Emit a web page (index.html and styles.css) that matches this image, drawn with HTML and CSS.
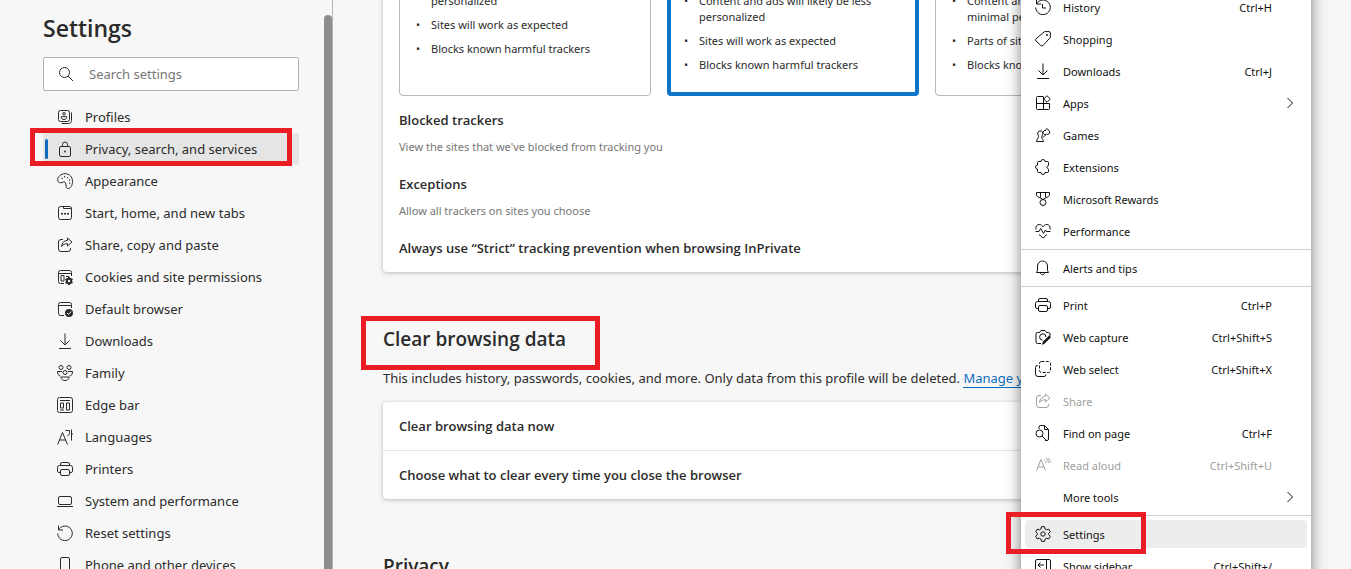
FILE: index.html
```html
<!DOCTYPE html>
<html lang="en">
<head>
  <meta charset="utf-8">
  <title>Settings</title>
  <link rel="stylesheet" href="styles.css">
</head>
<body>
  <svg class="sprite" aria-hidden="true">
    <symbol id="search" viewBox="0 0 16 16"><circle cx="6.5" cy="6.5" r="5"/><path d="M10 10l5 5"/></symbol>
    <symbol id="profiles" viewBox="0 0 16 16"><rect x="1.5" y="1.5" width="11" height="11" rx="2"/><circle cx="7" cy="4.8" r="1.3"/><path d="M4.2 7.7h5.6v.8c0 1.2-1.2 2-2.8 2s-2.8-.8-2.8-2zM14.5 3.5v8c0 1.8-1.2 3-3 3h-7"/></symbol>
    <symbol id="lock" viewBox="0 0 16 16"><rect x="2.5" y="5.5" width="11" height="10" rx="1.5"/><path d="M5.5 5.5V3.500a2.500 2.500 0 0 1 5 0v2"/><circle class="solid" cx="8" cy="10.5" r=".9"/></symbol>
    <symbol id="palette" viewBox="0 0 16 16"><path d="M.7 6.500C1 3.500 4 .7 8 .7c4.500 0 7.500 3.300 7.500 7.600 0 4-1.700 7-4.200 7.200-3.300.2-1.500-4.600-3.300-6.300-1.300-1.200-2.300.5-4.300.6C1.700 9.800.5 8.500.7 6.500z"/><path class="solid" d="M7 3h1.200v1.200H7zM10 4h1.200v1.200H10zM12 6.500h1.200v1.200H12zM12 9.500h1.200v1.200H12zM4.500 4.800h1.200V6H4.500z"/></symbol>
    <symbol id="start" viewBox="0 0 16 16"><rect x="1.5" y="1.5" width="13" height="13" rx="2"/><path d="M6.500 1.500v2h8"/><path class="solid" d="M4 8h2v1.500H4zM7 8h2v1.500H7zM10 8h2v1.500h-2z"/></symbol>
    <symbol id="share" viewBox="0 0 16 16"><path d="M6 2.500H4a2.500 2.500 0 0 0-2.500 2.500v7A2.500 2.500 0 0 0 4 14.500h7a2.500 2.500 0 0 0 2.500-2.500v-1"/><path d="M10.500 1l4.500 4-4.500 4V6.700C8 6.600 6.300 7.300 4.500 9.500 4.800 5.800 7 3.600 10.500 3.300z"/></symbol>
    <symbol id="cookies" viewBox="0 0 16 16"><path d="M7 14.500H3.500a2 2 0 0 1-2-2v-9a2 2 0 0 1 2-2h9a2 2 0 0 1 2 2V7M1.500 4.500h13M4 6.500h3v5.500H4zM9 7.500h3"/><circle class="solid" cx="12" cy="12" r="3.2"/><path class="teeth" d="M12 8v8M8.500 10l7 4M15.500 10l-7 4"/><circle class="hole" cx="12" cy="12" r="1.2"/></symbol>
    <symbol id="default" viewBox="0 0 16 16"><path d="M7 14.500H3.500a2 2 0 0 1-2-2v-9a2 2 0 0 1 2-2h9a2 2 0 0 1 2 2V7M1.500 4.500h13"/><circle class="solid" cx="12" cy="12" r="4"/><path class="tick" d="M10 12l1.500 1.500 2.700-3"/></symbol>
    <symbol id="download" viewBox="0 0 16 16"><path d="M8 .5v11M3.500 7.500L8 12l4.500-4.500M2 15.500h12"/></symbol>
    <symbol id="family" viewBox="0 0 16 16"><circle cx="4" cy="2.500" r="2"/><circle cx="12" cy="2.500" r="2"/><circle cx="8" cy="7.500" r="2"/><path d="M3.500 11C1.500 10.700.5 9.500.5 6.500H5M12.500 11c2-.3 3-1.500 3-4.500H11M4 12h8c0 2.400-1.800 3.500-4 3.500S4 14.400 4 12z"/></symbol>
    <symbol id="edgebar" viewBox="0 0 16 16"><rect x=".5" y=".5" width="15" height="15" rx="2"/><path d="M3 3.500h10M3.500 6h3v5h-3zM9.500 6h3v7h-3zM3 13h4"/></symbol>
    <symbol id="languages" viewBox="0 0 16 16"><path d="M.7 15.500L5.500 3.500l5 12M2.500 11h6.500M8.500 1.500h4v2c0 2-.8 3-2 3.500M14.500.5v11M14.500 5h1.500"/></symbol>
    <symbol id="printer" viewBox="0 0 16 16"><path d="M3.500 11.500H2A1.500 1.500 0 0 1 .5 10V6.500a2 2 0 0 1 2-2h11a2 2 0 0 1 2 2V10a1.500 1.500 0 0 1-1.500 1.500h-1.500M3.500 4.500V3A1.500 1.500 0 0 1 5 1.500h6A1.500 1.500 0 0 1 12.500 3v1.500"/><rect x="3.5" y="8.5" width="9" height="6" rx="1.5"/></symbol>
    <symbol id="laptop" viewBox="0 0 16 16"><rect x="1.5" y="3.5" width="13" height="8" rx="1.5"/><path d="M0 13.500h16"/></symbol>
    <symbol id="reset" viewBox="0 0 16 16"><path d="M1.500.5V5H6M1.500 5a7.300 7.300 0 1 1-.8 3.500"/></symbol>
    <symbol id="phone" viewBox="0 0 16 16"><rect x="3.5" y=".5" width="9" height="15" rx="1.5"/><path d="M6.500 13h3"/></symbol>
    <symbol id="history" viewBox="0 0 16 16"><path d="M1.500.5V5H6M1.500 5a7.300 7.300 0 1 1-.8 3.500M7.500 5v4H11"/></symbol>
    <symbol id="tag" viewBox="0 0 16 16"><path d="M9.500.6H14A1.500 1.500 0 0 1 15.400 2v4.500L8 14.500a1.600 1.600 0 0 1-2.200 0L1 10a1.600 1.600 0 0 1 0-2.200z"/><circle class="solid" cx="12" cy="4" r=".9"/></symbol>
    <symbol id="apps" viewBox="0 0 16 16"><path d="M8 1.500H2.500a1 1 0 0 0-1 1v11a1 1 0 0 0 1 1h11a1 1 0 0 0 1-1V8.500h-13M8.500 1.500v13M12 .7L15.300 4 12 7.300 8.700 4z"/></symbol>
    <symbol id="games" viewBox="0 0 16 16"><path d="M1.500 14.500h7c0-2-2-2.500-1.800-4.500.1-.8.800-1.200.8-2.500A2.300 2.300 0 0 0 5 4 2.300 2.300 0 0 0 2.800 7c0 1 1 1.300.8 2.500-.2 2-2.100 3-2.100 5zM8 10.500l2.500-2.500M8.500 5.500c-.5-2 1.500-2.500 2-2 0-2.500 3-2 2.800 0 1.700.2 2 2.500.5 3.500-1.200.8-2 .5-2.300 0-.3 1-2.500.8-3-.5"/></symbol>
    <symbol id="puzzle" viewBox="0 0 16 16"><path d="M6 2.500a2 2 0 0 1 4 0h2.500a1 1 0 0 1 1 1V6a1 1 0 0 1-.7 1 1.300 1.300 0 0 0 0 2.500c.5.2.7.5.7 1v2a1 1 0 0 1-1 1H10a2 2 0 0 1-4 0H3.500a1 1 0 0 1-1-1V10a2 2 0 0 1 0-4V3.500a1 1 0 0 1 1-1z"/></symbol>
    <symbol id="medal" viewBox="0 0 16 16"><path d="M1.500 1.500h13v2.300a2 2 0 0 1-1 1.700L8 8.500 2.500 5.500a2 2 0 0 1-1-1.700zM5.500 1.500v5M10.500 1.500v5"/><circle cx="8" cy="11.500" r="3"/></symbol>
    <symbol id="heart" viewBox="0 0 16 16"><path d="M1 6.500C.3 3.500 2 1.500 4.200 1.500 6 1.500 7.200 2.500 8 3.800 8.800 2.500 10 1.500 11.800 1.500 14 1.500 15.700 3.500 15 6.500M.5 8.500H4l1.800-3 2.700 5 2-3.500.8 1.500h4.200M4 11.500l4 3.500 4-3.500"/></symbol>
    <symbol id="bell" viewBox="0 0 16 16"><path d="M2.500 10.500V6a5 5 0 0 1 10 0v4.500l1 2h-12zM5.500 12.500c0 3 4 3 4 0"/></symbol>
    <symbol id="capture" viewBox="0 0 16 16"><path d="M6 14.500H2.500A1.500 1.500 0 0 1 1 13V5a1.500 1.500 0 0 1 1.500-1.500h2L6 1.500h4l1.500 2h2A1.500 1.500 0 0 1 15 5v2M11 8a3.200 3.200 0 1 0-3.500 3.200"/><path class="solid" d="M14.300 6.500l1.700 1.700-6.300 6.300-2.700 1.500.8-3.200z"/></symbol>
    <symbol id="select" viewBox="0 0 16 16"><path d="M3 4.500H2.500a2 2 0 0 0-2 2V13a2.500 2.500 0 0 0 2.500 2.500h6a2 2 0 0 0 2-2"/><rect x="4.5" y=".5" width="11" height="11" rx="2" stroke-dasharray="3 1.500"/></symbol>
    <symbol id="find" viewBox="0 0 16 16"><path d="M4 4V2A1.500 1.500 0 0 1 5.500.5h4l4 4V14a1.500 1.500 0 0 1-1.500 1.500h-2M9.500.5v4h4"/><circle cx="4.5" cy="8.5" r="3.5"/><path d="M7 11l4 4"/></symbol>
    <symbol id="aloud" viewBox="0 0 16 16"><path d="M1.500 13.500l4.500-11 4.500 11M3 10h6M9.500 3c1 .8 1.300 1.700 1.500 3M10.500 1c2 1.200 2.700 2.800 3 5M13 1c1.500 1.200 2 2.500 2.500 4.500"/></symbol>
    <symbol id="gear" viewBox="0 0 16 16"><path d="M6.500.7h3l.6 2.300 1.400.8 2.300-.6 1.500 2.600-1.600 1.500v1.400l1.600 1.600-1.500 2.600-2.300-.6-1.400.8-.6 2.200h-3l-.6-2.200-1.400-.8-2.300.6L.7 10.300l1.600-1.600V7.300L.7 5.800l1.500-2.600 2.300.6 1.400-.8z"/><circle cx="8" cy="8" r="2.200"/></symbol>
    <symbol id="sidebar" viewBox="0 0 16 16"><rect x=".5" y="1.5" width="15" height="13" rx="1.5"/><path d="M11.500 1.500v13M9 7H3M5.500 4.500L3 7l2.500 2.500"/></symbol>
    <symbol id="chevron" viewBox="0 0 8 12"><path d="M1.500 1L6.500 6l-5 5"/></symbol>
  </svg>

  <aside class="sidebar">
    <div class="sidebar-content">
      <h1>Settings</h1>
      <form class="search">
        <svg class="icon"><use href="#search"/></svg>
        <input type="search" placeholder="Search settings" aria-label="Search settings">
      </form>
      <nav class="nav">
        <a href="#"><svg class="icon"><use href="#profiles"/></svg>Profiles</a>
        <a href="#" class="active"><svg class="icon"><use href="#lock"/></svg>Privacy, search, and services</a>
        <a href="#"><svg class="icon"><use href="#palette"/></svg>Appearance</a>
        <a href="#"><svg class="icon"><use href="#start"/></svg>Start, home, and new tabs</a>
        <a href="#"><svg class="icon"><use href="#share"/></svg>Share, copy and paste</a>
        <a href="#"><svg class="icon"><use href="#cookies"/></svg>Cookies and site permissions</a>
        <a href="#"><svg class="icon"><use href="#default"/></svg>Default browser</a>
        <a href="#"><svg class="icon"><use href="#download"/></svg>Downloads</a>
        <a href="#"><svg class="icon"><use href="#family"/></svg>Family</a>
        <a href="#"><svg class="icon"><use href="#edgebar"/></svg>Edge bar</a>
        <a href="#"><svg class="icon"><use href="#languages"/></svg>Languages</a>
        <a href="#"><svg class="icon"><use href="#printer"/></svg>Printers</a>
        <a href="#"><svg class="icon"><use href="#laptop"/></svg>System and performance</a>
        <a href="#"><svg class="icon"><use href="#reset"/></svg>Reset settings</a>
        <a href="#"><svg class="icon"><use href="#phone"/></svg>Phone and other devices</a>
      </nav>
    </div>
    <div class="scrollbar"></div>
  </aside>

  <main class="main">
    <section class="panel tracking">
      <div class="levels">
        <div class="level basic">
          <ul>
            <li>Content and ads will likely be personalized</li>
            <li>Sites will work as expected</li>
            <li>Blocks known harmful trackers</li>
          </ul>
        </div>
        <div class="level selected">
          <ul>
            <li>Content and ads will likely be less personalized</li>
            <li>Sites will work as expected</li>
            <li>Blocks known harmful trackers</li>
          </ul>
        </div>
        <div class="level">
          <ul>
            <li>Content and ads will likely have minimal personalization</li>
            <li>Parts of sites might not work</li>
            <li>Blocks known harmful trackers</li>
          </ul>
        </div>
      </div>
      <div class="option">
        <h3>Blocked trackers</h3>
        <p>View the sites that we've blocked from tracking you</p>
      </div>
      <div class="option">
        <h3>Exceptions</h3>
        <p>Allow all trackers on sites you choose</p>
      </div>
      <div class="option">
        <h3>Always use “Strict” tracking prevention when browsing InPrivate</h3>
      </div>
    </section>

    <section>
      <h2><span class="marked">Clear browsing data</span></h2>
      <p class="intro">This includes history, passwords, cookies, and more. Only data from this profile will be deleted. <a href="#">Manage your data</a></p>
      <div class="panel">
        <h3 class="row">Clear browsing data now</h3>
        <h3 class="row">Choose what to clear every time you close the browser</h3>
      </div>
    </section>

    <section>
      <h2>Privacy</h2>
    </section>
  </main>

  <div class="menu">
    <button><svg class="icon"><use href="#history"/></svg>History<kbd>Ctrl+H</kbd></button>
    <button><svg class="icon"><use href="#tag"/></svg>Shopping</button>
    <button><svg class="icon"><use href="#download"/></svg>Downloads<kbd>Ctrl+J</kbd></button>
    <button><svg class="icon"><use href="#apps"/></svg>Apps<svg class="chevron"><use href="#chevron"/></svg></button>
    <button><svg class="icon"><use href="#games"/></svg>Games</button>
    <button><svg class="icon"><use href="#puzzle"/></svg>Extensions</button>
    <button><svg class="icon"><use href="#medal"/></svg>Microsoft Rewards</button>
    <button><svg class="icon"><use href="#heart"/></svg>Performance</button>
    <hr>
    <button><svg class="icon"><use href="#bell"/></svg>Alerts and tips</button>
    <hr>
    <button><svg class="icon"><use href="#printer"/></svg>Print<kbd>Ctrl+P</kbd></button>
    <button><svg class="icon"><use href="#capture"/></svg>Web capture<kbd>Ctrl+Shift+S</kbd></button>
    <button><svg class="icon"><use href="#select"/></svg>Web select<kbd>Ctrl+Shift+X</kbd></button>
    <button disabled><svg class="icon"><use href="#share"/></svg>Share</button>
    <button><svg class="icon"><use href="#find"/></svg>Find on page<kbd>Ctrl+F</kbd></button>
    <button disabled><svg class="icon"><use href="#aloud"/></svg>Read aloud<kbd>Ctrl+Shift+U</kbd></button>
    <button><svg class="icon"></svg>More tools<svg class="chevron"><use href="#chevron"/></svg></button>
    <hr>
    <button class="current"><svg class="icon"><use href="#gear"/></svg>Settings</button>
    <button><svg class="icon"><use href="#sidebar"/></svg>Show sidebar<kbd>Ctrl+Shift+/</kbd></button>
  </div>
</body>
</html>
```
FILE: styles.css
```css
* {
  box-sizing: border-box;
}

body {
  position: relative;
  display: flex;
  height: 100vh;
  margin: 0;
  overflow: hidden;
  background-color: #f7f7f7;
  color: #2b2b2b;
  font-family: "Noto Sans", "Open Sans", sans-serif;
  font-size: 13px;
  line-height: 20px;
}

h1, h2, h3, p, ul {
  margin: 0;
  padding: 0;
}

h1, h2, h3 {
  font-family: "Open Sans", sans-serif;
  font-weight: 600;
}

.sprite {
  position: absolute;
  width: 0;
  height: 0;
}

.icon {
  flex: none;
  width: 16px;
  height: 16px;
}

.icon, .chevron {
  fill: none;
  stroke: currentColor;
}

.solid {
  fill: currentColor;
  stroke: none;
}

.teeth {
  stroke-width: 2;
}

.hole {
  fill: #f7f7f7;
  stroke: none;
}

.tick {
  stroke: #f7f7f7;
}

/* sidebar */
.sidebar {
  flex: none;
  display: flex;
  width: 333px;
  border-right: 1px solid #b5b5b5;
}

.sidebar-content {
  flex: 1;
  padding: 12px 25px 0 43px;
}

h1 {
  font-size: 23px;
  line-height: 32px;
}

.search {
  display: flex;
  align-items: center;
  gap: 15px;
  height: 34px;
  margin: 13px 0 10px;
  padding: 0 14px;
  border: 1px solid #b3b3b3;
  border-radius: 2px;
  background-color: #fff;
}

.search input {
  flex: 1;
  min-width: 0;
  padding: 0;
  border: none;
  outline: none;
  font: inherit;
}

.search input::placeholder {
  color: #767676;
}

.nav a {
  position: relative;
  display: flex;
  align-items: center;
  gap: 12px;
  height: 32px;
  padding-left: 14px;
  border-radius: 2px;
  color: inherit;
  text-decoration: none;
  white-space: nowrap;
}

.nav .active {
  background-color: #e5e5e5;
}

.nav .active::before {
  content: "";
  position: absolute;
  left: 2px;
  top: 6px;
  width: 3px;
  height: 20px;
  border-radius: 2px;
  background-color: #0f6cbd;
}

.scrollbar {
  width: 8px;
  margin-top: 15px;
  border-radius: 4px 4px 0 0;
  background-color: #8d8d8d;
}

/* red frames */
.nav .active::after,
.marked::after,
.current::after {
  content: "";
  position: absolute;
  border: 5px solid #ea1c24;
}

.nav .active::after {
  inset: -5px 7px -1px -13px;
}

.marked {
  position: relative;
}

.marked::after {
  inset: -10px -34px -18px -22px;
}

.current::after {
  inset: -8px 161px -6px -19px;
}

/* page */
.main {
  flex: 1;
  max-width: 870px;
  padding: 0 0 0 50px;
}

.panel {
  border-radius: 4px;
  background-color: #fff;
  box-shadow: 0 1px 4px rgba(0, 0, 0, 0.25);
}

/* scrolled part way past the top of the window */
.tracking {
  margin-top: -40px;
  padding: 0 16px 14px;
}

.levels {
  display: grid;
  grid-template-columns: repeat(3, 1fr);
  gap: 16px;
  margin-bottom: 14px;
}

.level {
  display: flex;
  align-items: flex-end;
  height: 136px;
  padding: 0 32px 22px 16px;
  border: 1px solid #b9b9b9;
  border-radius: 4px;
}

.level.basic {
  padding-bottom: 38px;
}

.level.selected {
  padding: 0 29px 19px 13px;
  border: 4px solid #0f75cb;
}

.level ul {
  list-style: none;
  font-size: 11px;
  line-height: 16px;
}

.level li {
  position: relative;
  padding-left: 15px;
}

.level li::before {
  content: "•";
  position: absolute;
  left: 0;
}

.level li + li {
  margin-top: 8px;
}

.option + .option {
  margin-top: 18px;
}

h3 {
  font-size: 13px;
}

.option p {
  margin-top: 8px;
  color: #767676;
  font-size: 11px;
  line-height: 18px;
}

h2 {
  margin-top: 54px;
  font-size: 19px;
  line-height: 26px;
}

.intro {
  margin: 16px 0 14px;
  white-space: nowrap;
}

.intro a {
  border-bottom: 1px solid #0f6cbd;
  color: #0f6cbd;
  text-decoration: none;
}

.row {
  padding: 14px 16px;
}

.row + .row {
  border-top: 1px solid #e5e5e5;
}

/* browser menu */
.menu {
  position: absolute;
  top: -11px;
  right: 40px;
  width: 290px;
  background-color: #fff;
  box-shadow: 0 0 14px rgba(0, 0, 0, 0.5);
}

.menu button {
  position: relative;
  display: flex;
  align-items: center;
  gap: 12px;
  width: 282px;
  height: 28px;
  margin: 4px;
  padding: 0 13px 0 10px;
  border: none;
  border-radius: 4px;
  background: none;
  color: #111;
  font-family: inherit;
  font-size: 11px;
}

.menu button:disabled {
  color: #a0a0a0;
}

.menu .current {
  background-color: #ededed;
}

.menu kbd {
  margin: 0 22px 0 auto;
  font: inherit;
}

.menu .chevron {
  width: 8px;
  height: 12px;
  margin-left: auto;
}

.menu hr {
  height: 1px;
  margin: 4px 0;
  border: none;
  background-color: #d0d0d0;
}
```
